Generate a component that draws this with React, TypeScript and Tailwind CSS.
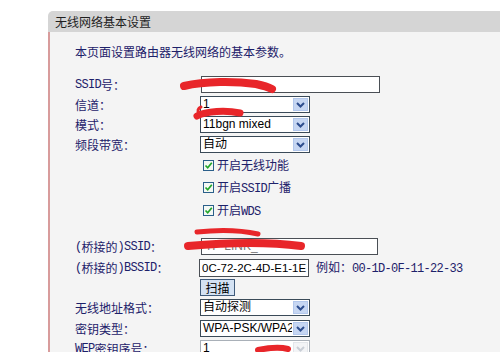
import React from "react";

const CJK = "'Noto Sans CJK SC', 'Liberation Sans', sans-serif";
const MONO = "'Liberation Mono', 'Noto Sans CJK SC', monospace";
const ARIAL = "'Liberation Sans', 'Noto Sans CJK SC', sans-serif";

function L({ children }: { children: React.ReactNode }) {
  return <span className="text-[12px] tracking-[-0.7px]" style={{ fontFamily: MONO }}>{children}</span>;
}

function Chevron({ color }: { color: string }) {
  return (
    <svg width="9" height="6" viewBox="0 0 9 6">
      <path d="M1 1 L4.5 4.5 L8 1" fill="none" stroke={color} strokeWidth="2" />
    </svg>
  );
}

function Select({ value, disabled }: { value: string; disabled?: boolean }) {
  return (
    <div
      className={`w-[110px] h-[17px] border flex items-stretch bg-white ${disabled ? "border-[#a9b0b8]" : "border-[#3a4a58]"}`}
    >
      <div className="flex-1 pl-[2px] text-[12px] leading-[15px] text-black overflow-hidden whitespace-nowrap" style={{ fontFamily: ARIAL }}>
        {value}
      </div>
      <div
        className={`w-[15px] m-[1px] flex items-center justify-center border ${disabled ? "bg-[#f3f4f6] border-[#e3e6ea]" : "bg-[#c6d6f2] border-[#b2c7ec]"}`}
      >
        <Chevron color={disabled ? "#c9ced6" : "#2d4d8e"} />
      </div>
    </div>
  );
}

function Check({ label, h }: { label: React.ReactNode; h: string }) {
  return (
    <div className={`flex items-center gap-[3px] ${h}`}>
      <div className="w-[11px] h-[11px] border border-[#2a5f8a] bg-[#f4f8f4] flex items-center justify-center">
        <svg width="9" height="9" viewBox="0 0 9 9">
          <path d="M1.5 4.5 L3.7 6.8 L7.8 1.8" fill="none" stroke="#22a52a" strokeWidth="1.7" />
        </svg>
      </div>
      <span className="text-[12px] leading-[14px] text-[#1d216a]" style={{ fontFamily: CJK }}>{label}</span>
    </div>
  );
}

function Row({ label, children, h = "h-[20px]" }: { label?: React.ReactNode; children?: React.ReactNode; h?: string }) {
  return (
    <div className={`flex items-start ${h}`}>
      <div className="w-[125px] h-[17px] flex items-center text-[12px] leading-[14px] text-[#1d216a] whitespace-nowrap" style={{ fontFamily: CJK }}>
        {label}
      </div>
      <div className="flex items-center">{children}</div>
    </div>
  );
}

export default function App() {
  return (
    <div className="relative w-[500px] h-[352px] bg-white overflow-hidden pt-[11px] pl-[48px]" style={{ fontFamily: CJK }}>
      <div className="flex flex-col h-[360px]">
        <div className="h-[21px] bg-[#d5d5d5] rounded-tl-[5px] pl-[7px] text-[12px] leading-[21px] text-[#1f1f1f] shrink-0">
          无线网络基本设置
        </div>
        <div className="flex-1 border-l-2 border-[#d89c9c] bg-[#f4f4f4] pl-[25px] pt-[13px]">
          <div className="h-[14px] text-[12px] leading-[14px] text-[#1d216a]">本页面设置路由器无线网络的基本参数。</div>
          <div className="mt-[17px]">
            <Row label={<><L>SSID</L>号：</>}>
              <div className="w-[179px] h-[17px] border border-[#4a4f55] bg-white ml-[1px]" />
            </Row>
            <Row label="信道：">
              <Select value="1" />
            </Row>
            <Row label="模式：">
              <Select value="11bgn mixed" />
            </Row>
            <Row label="频段带宽：">
              <Select value="自动" />
            </Row>
            <div className="pl-[128px] -mt-[2px]">
              <Check h="h-[22px]" label="开启无线功能" />
              <Check h="h-[23px]" label={<>开启<L>SSID</L>广播</>} />
              <Check h="h-[23px]" label={<>开启<L>WDS</L></>} />
            </div>
            <div className="mt-[16px]">
              <Row label={<><L>(</L>桥接的<L>)SSID</L>：</>} h="h-[21px]">
                <div className="w-[177px] h-[17px] border border-[#4a4f55] bg-white ml-[1px] pl-[3px] text-[12px] leading-[15px] text-[#7a7a7a]" style={{ fontFamily: ARIAL }}>
                  TP-LINK_
                </div>
              </Row>
              <Row label={<><L>(</L>桥接的<L>)BSSID</L>：</>}>
                <div className="w-[110px] h-[18px] border border-[#4a4f55] bg-white pl-[2px] text-[11.5px] leading-[16px] text-black overflow-hidden whitespace-nowrap -ml-[1px]" style={{ fontFamily: ARIAL }}>
                  0C-72-2C-4D-E1-1E
                </div>
                <span className="ml-[7px] text-[12px] leading-[14px] text-[#1d216a]">例如：<L>00-1D-0F-11-22-33</L></span>
              </Row>
              <Row label="">
                <div className="w-[35px] h-[17px] border border-[#3f5a7a] bg-[#d4e2f3] flex items-center justify-center text-[12px] leading-[14px] text-black">
                  扫描
                </div>
              </Row>
              <Row label="无线地址格式：" h="h-[21px]">
                <Select value="自动探测" />
              </Row>
              <Row label="密钥类型：">
                <Select value="WPA-PSK/WPA2-PSK" />
              </Row>
              <Row label={<><L>WEP</L>密钥序号：</>}>
                <Select value="1" disabled />
              </Row>
            </div>
          </div>
        </div>
      </div>
      <svg className="absolute left-0 top-0 pointer-events-none" width="500" height="352" viewBox="0 0 500 352">
        <g fill="none" stroke="#e8262a" strokeLinecap="round" strokeLinejoin="round">
          <path d="M184 86 C205 81 235 81 256 84 C265 86 270 88 272 89" strokeWidth="8" />
          <path d="M197 116 C206 111 226 110 240 113" strokeWidth="7" />
          <path d="M199 114 C197 111 198 108 201 107" strokeWidth="3" />
          <path d="M197 232 C215 230 240 230 258 234" strokeWidth="5" />
          <path d="M188 246 C222 243 262 241 301 246" strokeWidth="8" />
          <path d="M258 350 C268 348 280 347 288 349" strokeWidth="6" />
        </g>
      </svg>
    </div>
  );
}
